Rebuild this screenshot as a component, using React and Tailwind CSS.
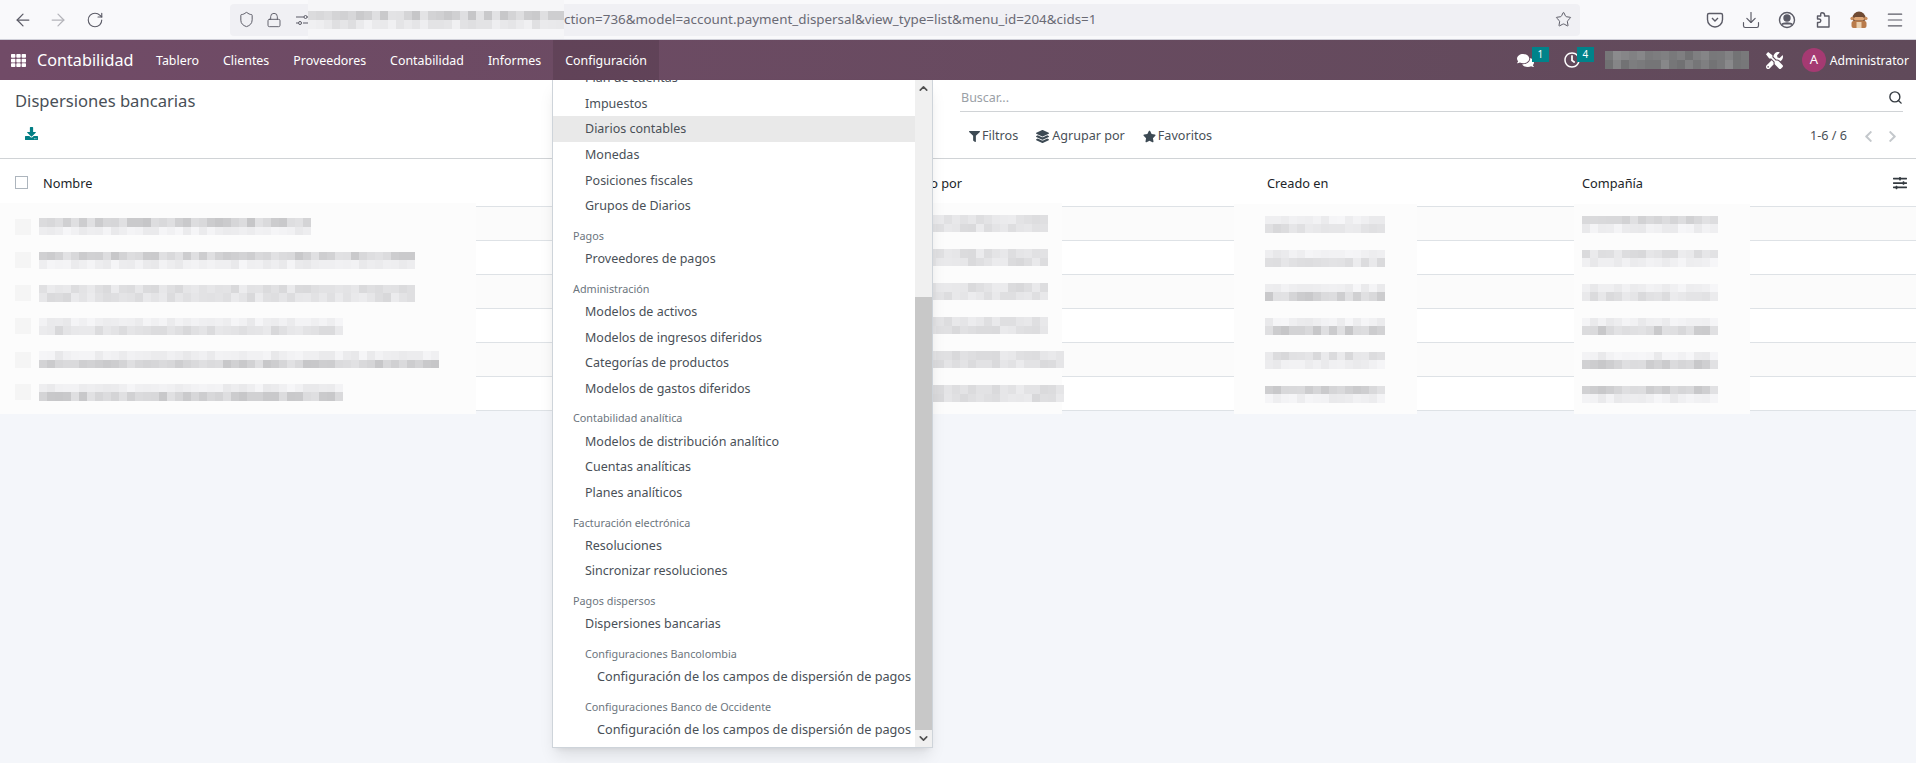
import { ArrowLeft, ArrowRight, RotateCw, Shield, Lock, Star, Download, Menu, Search, ChevronUp, ChevronDown } from "lucide-react"
import { FaTh, FaComments, FaRegClock, FaTools, FaFilter, FaLayerGroup, FaStar, FaDownload, FaSlidersH, FaChevronLeft, FaChevronRight } from "react-icons/fa"

// deterministic noise so the blurred blocks look the same on every render
function noise(seed, i) {
  const x = Math.sin(seed * 127.1 + i * 311.7) * 43758.5453
  return x - Math.floor(x)
}

function Mosaic({ width, seed, rows, base = 0, step = 8, cellH = 8.5 }) {
  const cols = Math.round(width / step)
  return (
    <div className="flex flex-col shrink-0">
      {rows.map((range, r) => (
        <div key={r} className="flex">
          {Array.from({ length: cols }).map((_, i) => {
            const v = Math.round(range[0] + noise(seed + r, i) * (range[1] - range[0]) + base)
            return <div key={i} style={{ width: step, height: cellH, background: `rgb(${v},${v},${v + 2})` }} />
          })}
        </div>
      ))}
    </div>
  )
}

const DARK = [198, 226]
const MID = [216, 236]
const LIGHT = [232, 246]

const tableRows = [
  { name: 272, nudge: "pt-[6px]", nameRows: [DARK, LIGHT], by: 136, byRows: [MID, MID], at: [LIGHT, MID], co: [DARK, LIGHT] },
  { name: 376, nudge: "pt-[5px]", nameRows: [DARK, LIGHT], by: 136, byRows: [MID, MID], at: [LIGHT, MID], co: [MID, LIGHT] },
  { name: 376, nudge: "pt-[3px]", nameRows: [MID, MID], by: 136, byRows: [MID, MID], at: [LIGHT, DARK], co: [LIGHT, MID] },
  { name: 304, nudge: "pt-[1px]", nameRows: [LIGHT, MID], by: 136, byRows: [MID, MID], at: [LIGHT, DARK], co: [LIGHT, DARK] },
  { name: 400, nudge: "", nameRows: [LIGHT, DARK], by: 152, byRows: [MID, MID], at: [MID, LIGHT], co: [LIGHT, DARK] },
  { name: 304, nudge: "pb-[3px]", nameRows: [LIGHT, DARK], by: 152, byRows: [MID, MID], at: [DARK, LIGHT], co: [DARK, LIGHT] },
]

const navItems = ["Tablero", "Clientes", "Proveedores", "Contabilidad", "Informes"]

const menu = [
  { t: "item", label: "Plan de cuentas" },
  { t: "item", label: "Impuestos" },
  { t: "item", label: "Diarios contables", active: true },
  { t: "item", label: "Monedas" },
  { t: "item", label: "Posiciones fiscales" },
  { t: "item", label: "Grupos de Diarios" },
  { t: "head", label: "Pagos" },
  { t: "item", label: "Proveedores de pagos" },
  { t: "head", label: "Administración" },
  { t: "item", label: "Modelos de activos" },
  { t: "item", label: "Modelos de ingresos diferidos" },
  { t: "item", label: "Categorías de productos" },
  { t: "item", label: "Modelos de gastos diferidos" },
  { t: "head", label: "Contabilidad analítica" },
  { t: "item", label: "Modelos de distribución analítico" },
  { t: "item", label: "Cuentas analíticas" },
  { t: "item", label: "Planes analíticos" },
  { t: "head", label: "Facturación electrónica" },
  { t: "item", label: "Resoluciones" },
  { t: "item", label: "Sincronizar resoluciones" },
  { t: "head", label: "Pagos dispersos" },
  { t: "item", label: "Dispersiones bancarias" },
  { t: "subhead", label: "Configuraciones Bancolombia" },
  { t: "subitem", label: "Configuración de los campos de dispersión de pagos" },
  { t: "subhead", label: "Configuraciones Banco de Occidente" },
  { t: "subitem", label: "Configuración de los campos de dispersión de pagos" },
]

function MenuRow({ row }) {
  if (row.t === "head") {
    return <div className="h-[27.2px] pt-[8px] pl-[20px] text-[10.8px] leading-[18px] text-[#6c757d]">{row.label}</div>
  }
  if (row.t === "subhead") {
    return <div className="h-[27.2px] pt-[8px] pl-[32px] text-[10.8px] leading-[18px] text-[#6c757d]">{row.label}</div>
  }
  if (row.t === "subitem") {
    return <div className="h-[25.65px] pl-[44px] text-[12.7px] leading-[25.65px] text-[#495057] whitespace-nowrap">{row.label}</div>
  }
  return (
    <div className={`h-[25.65px] pl-[32px] text-[12.5px] leading-[25.65px] text-[#495057] ${row.active ? "bg-[#e9e9e9]" : ""}`}>
      {row.label}
    </div>
  )
}

function BrowserBar() {
  return (
    <div className="h-[40px] bg-[#f9f9fb] border-b border-[#cfcfd8] flex items-center pl-[13px] text-[#5b5b66]">
      <ArrowLeft size={20} strokeWidth={1.5} />
      <ArrowRight size={20} strokeWidth={1.5} className="ml-[15px] text-[#b4b4ba]" />
      <RotateCw size={18} strokeWidth={1.5} className="ml-[18px]" />
      <div className="ml-[126px] w-[1350px] h-[32px] rounded-[4px] bg-[#f0f0f4] flex items-center pl-[8px]">
        <Shield size={17} strokeWidth={1.4} />
        <Lock size={16} strokeWidth={1.4} className="ml-[11px]" />
        <svg width="12" height="12" viewBox="0 0 12 12" className="ml-[14px] shrink-0" fill="none" stroke="currentColor">
          <path d="M0 3h8M11 3h1M0 9h2M7 9h5" />
          <circle cx="9.5" cy="3" r="1.5" />
          <circle cx="4" cy="9" r="1.5" />
        </svg>
        <div className="w-[256px] h-[39px] -my-[3px] bg-[#f6f6f8] flex items-center shrink-0">
          <Mosaic width={256} seed={3} rows={[[196, 228], [222, 242]]} cellH={9} />
        </div>
        <span className="text-[13.4px] text-[#6a6a74] whitespace-nowrap">
          ction=736&amp;model=account.payment_dispersal&amp;view_type=list&amp;menu_id=204&amp;cids=1
        </span>
        <Star size={17} strokeWidth={1.4} className="ml-auto mr-[8px]" />
      </div>
      <div className="ml-[125px] flex items-center gap-[16px]">
        <svg width="20" height="20" viewBox="0 0 20 20" fill="none" stroke="currentColor" strokeWidth="1.4">
          <path d="M4 3.5h12a1.5 1.5 0 0 1 1.5 1.5v4.5a7.5 7.5 0 0 1-15 0V5A1.5 1.5 0 0 1 4 3.5z" />
          <path d="M7 8l3 3 3-3" />
        </svg>
        <Download size={20} strokeWidth={1.4} />
        <svg width="20" height="20" viewBox="0 0 20 20" fill="none" stroke="currentColor" strokeWidth="1.4">
          <circle cx="10" cy="10" r="7.5" />
          <circle cx="10" cy="8" r="3" fill="currentColor" />
          <path d="M4.8 14.5c1.5-2 8.9-2 10.4 0" fill="currentColor" />
        </svg>
        <svg width="20" height="20" viewBox="0 0 20 20" fill="none" stroke="currentColor" strokeWidth="1.4" strokeLinejoin="round">
          <path d="M9 2.8c1.6 0 2.6 1 2.6 2.4V6H16v11H4.5v-4.5H6c1.2 0 1.8-.8 1.8-1.7S7.2 9 6 9H4.5V6h3.2V5.2C7.7 3.8 7.6 2.8 9 2.8z" />
        </svg>
        <svg width="20" height="20" viewBox="0 0 20 20">
          <circle cx="10" cy="8" r="6.5" fill="#6f4a33" />
          <circle cx="3.2" cy="8.5" r="1.8" fill="#c98d5c" />
          <circle cx="16.8" cy="8.5" r="1.8" fill="#c98d5c" />
          <rect x="2.5" y="11" width="15" height="7" rx="2" fill="#b97b4b" />
          <rect x="5" y="7" width="10" height="3.5" rx="1.5" fill="#e0a878" />
          <rect x="7.5" y="12" width="5" height="6" fill="#ead0b0" />
        </svg>
        <Menu size={20} strokeWidth={1.4} />
      </div>
    </div>
  )
}

function NavBar() {
  return (
    <div className="h-[40px] bg-linear-to-r from-[#714b67] to-[#604a5a] flex items-center text-white">
      <FaTh size={15} className="ml-[11px]" />
      <span className="ml-[11px] w-[107px] pt-[1px] text-[16.2px]">Contabilidad</span>
      <div className="flex h-full text-[12.4px]">
        {navItems.map((n) => (
          <div key={n} className="px-[12px] pt-[3px] flex items-center">{n}</div>
        ))}
        <div className="px-[12px] pt-[3px] flex items-center bg-black/10">Configuración</div>
      </div>
      <div className="ml-auto flex items-center pr-[7px]">
        <div className="relative">
          <FaComments size={17} />
          <span className="absolute -top-[5px] left-[15px] w-[17px] h-[15px] bg-[#00838a] text-[10px] leading-[15px] text-center">1</span>
        </div>
        <div className="relative ml-[30px]">
          <FaRegClock size={16} />
          <span className="absolute -top-[5px] left-[13px] w-[17px] h-[15px] bg-[#00838a] text-[10px] leading-[15px] text-center">4</span>
        </div>
        <div className="ml-[25px]">
          <Mosaic width={144} seed={9} rows={[[112, 140], [112, 140]]} cellH={9} />
        </div>
        <FaTools size={17} className="ml-[17px]" />
        <div className="ml-[19px] w-[24px] h-[24px] rounded-full bg-[#a53a72] text-[13px] flex items-center justify-center">A</div>
        <span className="ml-[4px] pt-[3px] text-[12.2px]">Administrator</span>
      </div>
    </div>
  )
}

function ControlPanel() {
  return (
    <div className="h-[79px] bg-white border-b border-[#d0d3d6] flex justify-between">
      <div className="pl-[15px]">
        <div className="pt-[9px] text-[16.6px] leading-[24px] text-[#495057]">Dispersiones bancarias</div>
        <FaDownload size={13} className="mt-[14px] ml-[10px] text-[#017e84]" />
      </div>
      <div className="w-[943px] mr-[13px]">
        <div className="h-[32px] border-b border-[#d0d3d6] flex items-center justify-between">
          <span className="pl-[1px] pt-[6px] text-[12.5px] text-[#9aa0a6]">Buscar...</span>
          <Search size={15} strokeWidth={2.2} className="text-[#343a40] mt-[4px]" />
        </div>
        <div className="flex items-center h-[46px] pt-[3px] text-[12.6px] text-[#495057]">
          <FaFilter size={11} className="ml-[9px] text-[#3d4a54]" />
          <span className="ml-[2px]">Filtros</span>
          <FaLayerGroup size={13} className="ml-[18px] text-[#3d4a54]" />
          <span className="ml-[3px]">Agrupar por</span>
          <FaStar size={13} className="ml-[18px] text-[#3d4a54]" />
          <span className="ml-[2px]">Favoritos</span>
          <span className="ml-auto">1-6 / 6</span>
          <FaChevronLeft size={13} className="ml-[15px] text-[#c4c8cc]" />
          <FaChevronRight size={13} className="ml-[11px] mr-[4px] text-[#c4c8cc]" />
        </div>
      </div>
    </div>
  )
}

function Table() {
  return (
    <div>
      <div className="h-[48px] bg-white border-b border-[#dee2e6] grid grid-cols-[890px_344px_340px_1fr] items-center text-[12.75px] text-[#212529]">
        <div className="flex items-center pl-[15px]">
          <div className="w-[13px] h-[13px] border border-[#adb5bd]" />
          <span className="ml-[15px] pt-[2px]">Nombre</span>
        </div>
        <span className="pl-[5px] pt-[2px]">Creado por</span>
        <span className="pl-[33px] pt-[2px]">Creado en</span>
        <div className="flex items-center justify-between pl-[8px] pr-[9px]">
          <span className="pt-[2px]">Compañía</span>
          <FaSlidersH size={14} className="text-[#343a40]" />
        </div>
      </div>
      {tableRows.map((r, i) => (
        <div key={i} className={`h-[34px] border-b border-[#dee2e6] grid grid-cols-[890px_344px_340px_1fr] ${i % 2 === 0 ? "bg-[#fbfbfb]" : "bg-white"}`}>
          <div className={`w-[476px] h-[41px] -mt-[4px] bg-[#fcfcfc] flex items-center ${r.nudge}`}>
            <div className="ml-[15px] w-[16px] h-[16px] bg-[#f5f5f5]" />
            <div className="ml-[8px]"><Mosaic width={r.name} seed={i + 11} rows={r.nameRows} /></div>
          </div>
          <div className="w-[172px] h-[41px] -mt-[4px] bg-[#fcfcfc] flex items-center pl-[22px]">
            <Mosaic width={r.by} seed={i + 31} rows={r.byRows} />
          </div>
          <div className="w-[183px] h-[40px] -mt-[3px] bg-[#fcfcfc] flex items-center pl-[31px]">
            <Mosaic width={120} seed={i + 51} rows={r.at} />
          </div>
          <div className="w-[176px] h-[40px] -mt-[3px] bg-[#fcfcfc] flex items-center pl-[8px]">
            <Mosaic width={136} seed={i + 71} rows={r.co} />
          </div>
        </div>
      ))}
    </div>
  )
}

function Dropdown() {
  return (
    <div className="absolute top-[80px] left-[552px] w-[381px] h-[668px] bg-white border border-t-0 border-[#ced4da] shadow-lg flex overflow-hidden">
      <div className="w-[362px] shrink-0 overflow-hidden">
        <div className="-mt-[15px]">
          {menu.map((row, i) => <MenuRow key={i} row={row} />)}
        </div>
      </div>
      <div className="w-[17px] bg-[#f0f0f0] flex flex-col">
        <div className="h-[17px] flex items-center justify-center">
          <ChevronUp size={13} strokeWidth={3} className="text-[#505050]" />
        </div>
        <div className="h-[200px]" />
        <div className="flex-1 bg-[#c8c8c8]" />
        <div className="h-[17px] flex items-center justify-center">
          <ChevronDown size={13} strokeWidth={3} className="text-[#505050]" />
        </div>
      </div>
    </div>
  )
}

export default function App() {
  return (
    <div className="relative h-[763px] overflow-hidden bg-[#f4f6fa] font-['Noto_Sans',sans-serif]">
      <BrowserBar />
      <NavBar />
      <ControlPanel />
      <Table />
      <Dropdown />
    </div>
  )
}
